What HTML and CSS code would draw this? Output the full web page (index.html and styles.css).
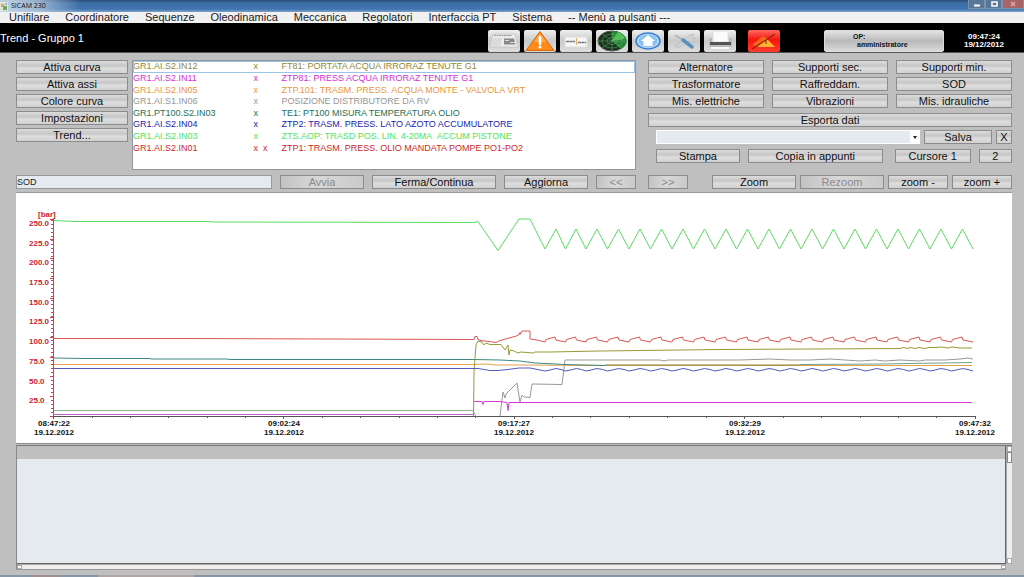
FILE: index.html
```html
<!DOCTYPE html>
<html lang="it">
<head>
<meta charset="utf-8">
<title>SICAM 230</title>
<link rel="stylesheet" href="styles.css">
</head>
<body>
<header class="titlebar">
  <svg class="app-icon" viewBox="0 0 8 9"><rect width="8" height="9" fill="#dbe6d4"/><path d="M1 2h3v3H1z" fill="#e09a83"/><path d="M3 4h4v4H3z" fill="#6aae5c"/><path d="M5 1h2v2H5z" fill="#8fb6dd"/></svg>
  <span>SICAM 230</span>
  <div class="window-buttons">
    <button class="win" aria-label="Riduci"><svg viewBox="0 0 14 8"><path d="M4 5.500h6" stroke="#fff" stroke-width="2"/></svg></button>
    <button class="win" aria-label="Ingrandisci"><svg viewBox="0 0 14 8"><path d="M5 2h5v4H5z" fill="none" stroke="#fff" stroke-width="1.500"/></svg></button>
    <button class="win win-close" aria-label="Chiudi"><svg viewBox="0 0 18 8"><path d="M7 2l4 4M11 2L7 6" stroke="#dca9a9" stroke-width="1.500"/></svg></button>
  </div>
</header>
<nav class="menu">
  <a href="#">Unifilare</a><a href="#">Coordinatore</a><a href="#">Sequenze</a><a href="#">Oleodinamica</a><a href="#">Meccanica</a><a href="#">Regolatori</a><a href="#">Interfaccia PT</a><a href="#">Sistema</a><a href="#">-- Menù a pulsanti ---</a>
</nav>
<section class="banner">
  <h1>Trend - Gruppo 1</h1>
  <div class="tools">
    <button class="tool" aria-label="Giornale"><svg viewBox="0 0 32 22"><path d="M5 4h22l3 13H2z" fill="#ececec" stroke="#bbb" stroke-width=".6"/><path d="M6 5.500h18" stroke="#999" stroke-width="1" stroke-dasharray="2 .5"/><path d="M5 9h9M4 11h9M4 13h9M3 15h10" stroke="#bbb" stroke-width=".7"/><path d="M16 8.500h10l1.500 6H16z" fill="#888"/><path d="M17 10.500h4M22 12.500h5" stroke="#ddd"/></svg></button>
    <button class="tool" aria-label="Allarmi"><svg viewBox="0 0 32 22"><path d="M16 1.500L30 20.500H2z" fill="#ff8a1c" stroke="#d96a0c" stroke-linejoin="round"/><path d="M16 3.500L22 12H10z" fill="#ffab4c"/><path d="M16 7v7" stroke="#fff" stroke-width="2.600" stroke-linecap="round"/><circle cx="16" cy="17" r="1.500" fill="#fff"/></svg></button>
    <button class="tool" aria-label="Sinottico"><svg viewBox="0 0 32 22"><path d="M5 7h22v10H5z" fill="#f7f7f7" stroke="#ddd"/><path d="M6 11.500h9M18 12.500h8" stroke="#777" stroke-width="1.300" stroke-dasharray="3 .4"/><path d="M16.500 8v7" stroke="#ddb36c" stroke-width="1.300"/></svg></button>
    <button class="tool" aria-label="Radar"><svg viewBox="0 0 32 22"><ellipse cx="16" cy="11" rx="14" ry="10" fill="#18361d" stroke="#555"/><path d="M16 11L16 1A14 10 0 0 1 25 19z" fill="#238936"/><path d="M16 11L22 2A14 10 0 0 1 29 9z" fill="#55c555"/><g fill="none" stroke="#66ad6c" stroke-width=".5"><ellipse cx="16" cy="11" rx="10" ry="7"/><ellipse cx="16" cy="11" rx="5" ry="3.500"/><path d="M2 11h28M16 1v20M6 4l20 14M26 4L6 18"/></g></svg></button>
    <button class="tool" aria-label="Home"><svg viewBox="0 0 32 22"><ellipse cx="16" cy="11" rx="12" ry="8" fill="#b8d9f8" stroke="#377fd0" stroke-width="1.500"/><ellipse cx="16" cy="11" rx="9.500" ry="6.300" fill="#8cc0f0"/><path d="M16 5l7 6h-2.500v5h-9v-5H9z" fill="#fff"/></svg></button>
    <button class="tool" aria-label="Strumenti"><svg viewBox="0 0 32 22"><path d="M21 5l5-1-2 3 1 2 3-1c-1 4-5 4-7 3L10 18l-3-2L18 8z" fill="#cfd1d3" stroke="#b5b5b5" stroke-width=".6"/><path d="M7 5l8 5" stroke="#a5a5a5" stroke-width="1.300"/><path d="M15 10l9 7" stroke="#5a8fc1" stroke-width="3.500" stroke-linecap="round"/></svg></button>
    <button class="tool" aria-label="Stampante"><svg viewBox="0 0 32 22"><path d="M9 1h15v11H9z" fill="#fbfbfb" stroke="#ddd"/><path d="M5 8h3v4h17V8h3v9H5z" fill="#b7b9ba"/><path d="M6 12h21v3H6z" fill="#505456"/><path d="M7 17h18v2H7z" fill="#f8f8f8"/></svg></button>
    <button class="tool tool-alarm" aria-label="Tacita allarme"><svg viewBox="0 0 32 22"><path d="M5 14l10-8 4 3-3 8H7z" fill="#f36918"/><path d="M18 8l9 9H10z" fill="#ffb32e"/><path d="M18 10v4" stroke="#9d5a12" stroke-width="1.500"/><path d="M4 19L27 4" stroke="#9d1d10" stroke-width="1.300"/></svg></button>
  </div>
  <button class="operator"><span>OP:</span><span class="operator-name">amministratore</span></button>
  <div class="clock"><time>09:47:24</time><time>19/12/2012</time></div>
</section>
<main>
  <div class="top">
    <div class="left">
      <div class="side">
        <button>Attiva curva</button><button>Attiva assi</button><button>Colore curva</button><button>Impostazioni</button><button>Trend...</button>
      </div>
      <div class="list">
        <table class="curves">
          <tr class="olive selected"><td>GR1.AI.S2.IN12</td><td>x</td><td>FT81: PORTATA ACQUA IRRORAZ TENUTE G1</td></tr>
          <tr class="magenta"><td>GR1.AI.S2.IN11</td><td>x</td><td>ZTP81: PRESS ACQUA IRRORAZ TENUTE G1</td></tr>
          <tr class="orange"><td>GR1.AI.S2.IN05</td><td>x</td><td>ZTP.101: TRASM. PRESS. ACQUA MONTE - VALVOLA VRT</td></tr>
          <tr class="gray"><td>GR1.AI.S1.IN06</td><td>x</td><td>POSIZIONE DISTRIBUTORE DA RV</td></tr>
          <tr class="teal"><td>GR1.PT100.S2.IN03</td><td>x</td><td>TE1: PT100 MISURA TEMPERATURA OLIO</td></tr>
          <tr class="blue"><td>GR1.AI.S2.IN04</td><td>x</td><td>ZTP2: TRASM. PRESS. LATO AZOTO ACCUMULATORE</td></tr>
          <tr class="green"><td>GR1.AI.S2.IN03</td><td>x</td><td>ZTS.AOP: TRASD POS. LIN. 4-20MA&nbsp; ACCUM PISTONE</td></tr>
          <tr class="red"><td>GR1.AI.S2.IN01</td><td>x&nbsp; x</td><td>ZTP1: TRASM. PRESS. OLIO MANDATA POMPE PO1-PO2</td></tr>
        </table>
      </div>
    </div>
    <div class="right">
      <div class="groups">
        <button>Alternatore</button><button>Supporti sec.</button><button>Supporti min.</button>
        <button>Trasformatore</button><button>Raffreddam.</button><button>SOD</button>
        <button>Mis. elettriche</button><button>Vibrazioni</button><button>Mis. idrauliche</button>
      </div>
      <button class="export">Esporta dati</button>
      <div class="save-row">
        <div class="combo"><select aria-label="Configurazione"><option></option></select></div>
        <button>Salva</button><button>X</button>
      </div>
      <div class="print-row">
        <button>Stampa</button><button>Copia in appunti</button><button>Cursore 1</button><button>2</button>
      </div>
    </div>
  </div>
  <div class="bar">
    <div class="bar-left">
      <input type="text" value="SOD" aria-label="Nome trend">
      <button disabled>Avvia</button><button>Ferma/Continua</button><button>Aggiorna</button><button disabled>&lt;&lt;</button>
    </div>
    <div class="bar-right">
      <button class="forward" disabled>&gt;&gt;</button><button>Zoom</button><button disabled>Rezoom</button><button>zoom -</button><button>zoom +</button>
    </div>
  </div>
  <div class="chart">
    <svg viewBox="16 193 996 250" role="img" aria-label="Trend">
      <g class="y-axis">
        <path d="M53.500 219V416"/>
        <path class="minor" d="M52 220V416"/>
        <path d="M50 219.500h3M50 239.500h3M50 258.500h3M50 278.500h3M50 298.500h3M50 317.500h3M50 337.500h3M50 357.500h3M50 376.500h3M50 396.500h3M50 416.500h3"/>
        <text x="38" y="217">[bar]</text>
        <text x="29" y="226">250.0</text><text x="29" y="246">225.0</text><text x="29" y="265">200.0</text><text x="29" y="285">175.0</text><text x="29" y="305">150.0</text><text x="29" y="324">125.0</text><text x="29" y="344">100.0</text><text x="29" y="364">75.0</text><text x="29" y="384">50.0</text><text x="29" y="403">25.0</text>
      </g>
      <g class="x-axis">
        <path d="M53 416.500H975"/>
        <path d="M53.500 416v3M283.500 416v3M514.500 416v3M744.500 416v3M975.500 416v3"/>
        <path d="M92.500 416v2M130.500 416v2M168.500 416v2M207.500 416v2M245.500 416v2M322.500 416v2M360.500 416v2M399.500 416v2M437.500 416v2M475.500 416v2M552.500 416v2M590.500 416v2M629.500 416v2M667.500 416v2M706.500 416v2M783.500 416v2M821.500 416v2M860.500 416v2M898.500 416v2M936.500 416v2"/>
        <text x="54" y="426">08:47:22</text><text x="54" y="435">19.12.2012</text>
        <text x="284" y="426">09:02:24</text><text x="284" y="435">19.12.2012</text>
        <text x="514" y="426">09:17:27</text><text x="514" y="435">19.12.2012</text>
        <text x="745" y="426">09:32:29</text><text x="745" y="435">19.12.2012</text>
        <text x="975" y="426">09:47:32</text><text x="975" y="435">19.12.2012</text>
      </g>
      <g class="curve">
        <path stroke="#9bb08f" d="M54 410.500H473l3 6"/>
        <path stroke="#999" d="M500 416l3-24 2 6 1-4 11-11 3 19 2-7 2 2 6 .5 2-13.500 30 .5 3-24.500H660l4 1 4-1h72l30-1 20 1 20 0 20-1 30 2 15-1 10 1 15-1 20 1 5-1 20 0 15-1 8-1 5 1"/>
        <path stroke="#c264c9" d="M54 414.500H473"/>
        <path stroke="#d63ad6" d="M474 401.500h8l1 3 1-3h16l7 1 1 8 1-8 3 0H972"/>
        <path stroke="#e2a14a" d="M54 364.500H474l12-.5 10 1 20 0 90 .5H972"/>
        <path stroke="#3f8980" d="M54 358l30 .5h66l1 .5h77l1 .5H474l26 .5 20 1 15 2 30 1.500 40 1"/>
        <path stroke="#83833a" d="M605 365H800"/>
        <path stroke="#6fa382" d="M800 364.500l80-.5 60-1 32-.5"/>
        <path stroke="#999a38" d="M473.500 416l.5-44 2-27 2-4 4 1 2 3 2-2 4 1.500 11 0 4 5.500 3-5 1 10 1-5 4 1 4 2 3-1 12 1 2-1 15 0 50-1 120-1.500 180-1 4-1 3 1 4-1 4 1 4-1 6 1 4-1 7 0 5-.5 7 1 4-1 8 1h12"/>
        <path stroke="#5757bc" d="M54 368.500H474l4 0 12 2 8 0 10-1 11-1.500h11l15 3 5-1 6-1.500 5 1 4.500 1.500 5-1 6-1.500 5 1 4.500 1.500
          l5-1 6-1.500 5.500 1 5 1.500 5-1 6-1.500 5.500 1 5 1.500 5-1 6-1.500 5.500 1 5 1.500 5-1 6-1.500 5.500 1 5 1.500 5-1 6-1.500 5.500 1 5 1.500 5-1 6-1.500 5.500 1 5 1.500
          l5-1 6-1.500 5.500 1 5 1.500 5-1 6-1.500 5.500 1 5 1.500 5-1 6-1.500 5.500 1 5 1.500 5-1 6-1.500 5.500 1 5 1.500 5-1 6-1.500 5.500 1 5 1.500 5-1 6-1.500 5.500 1 5 1.500
          l5-1 6-1.500 5.500 1 5 1.500 5-1 6-1.500 5.500 1 5 1.500 5-1 6-1.500 5.500 1 5 1.500 5-1 6-1.500 5.500 1 5 1.500 5-1 6-1.500 5.500 1 5 1.500 5-1 6-1.500 5.500 1 5 1.500"/>
        <path stroke="#d85858" d="M54 338.500H185l289 1 1-3 2 0 1 3 3 1 8 1 7 1 4-2 18-5 2-3 0 2 2-3.500h8v8l7 1 8 2
          l1-2.500 9-2.500 1 3 9.500 2 1-2.500 9-2.500 1 3 9.500 2
          l1-2.500 9.500-2.500 1 3 10 2 1-2.500 9.500-2.500 1 3 10 2 1-2.500 9.500-2.500 1 3 10 2 1-2.500 9.500-2.500 1 3 10 2 1-2.500 9.500-2.500 1 3 10 2 1-2.500 9.500-2.500 1 3 10 2
          l1-2.500 9.500-2.500 1 3 10 2 1-2.500 9.500-2.500 1 3 10 2 1-2.500 9.500-2.500 1 3 10 2 1-2.500 9.500-2.500 1 3 10 2 1-2.500 9.500-2.500 1 3 10 2 1-2.500 9.500-2.500 1 3 10 2
          l1-2.500 9.500-2.500 1 3 10 2 1-2.500 9.500-2.500 1 3 10 2 1-2.500 9.500-2.500 1 3 10 2 1-2.500 9.500-2.500 1 3 10 2 1-2.500 9.500-2.500 1 3 10 2 1-2.500 9.500-2.500 1 3 10 2"/>
        <path stroke="#5cdb62" d="M54 220.500l21 1 130 0 10 .5 259 .5 1 0 2.500-1.500 20.500 29.500L519 219h11l15 30 11-20 9.500 20 10.500-20 10 20
          l11-20 10.500 20 11-20 10.500 20 11-20 10.500 20 11-20 10.500 20 11-20 10.500 20 11-20 10.500 20
          l11-20 10.500 20 11-20 10.500 20 11-20 10.500 20 11-20 10.500 20 11-20 10.500 20 11-20 10.500 20
          l11-20 10.500 20 11-20 10.500 20 11-20 10.500 20 11-20 10.500 20 11-20 10.500 20 11-20 10.500 20"/>
      </g>
    </svg>
  </div>
  <div class="events">
    <div class="events-head"></div>
    <div class="events-body"></div>
    <div class="vscroll"><i></i><b></b><i></i></div>
    <div class="hscroll"><i></i><i></i></div>
  </div>
</main>
<footer class="taskbar"></footer>
</body>
</html>
```
FILE: styles.css
```css
* { box-sizing: border-box; }
body {
  margin: 0;
  min-height: 100vh;
  display: flex;
  flex-direction: column;
  background: #bfbfbf;
  color: #111;
  font: 11px/14px "Liberation Sans", Arial, sans-serif;
}
svg { display: block; }
button { font: inherit; color: inherit; margin: 0; padding: 0; }

.titlebar {
  height: 12px;
  display: flex;
  align-items: center;
  gap: 3px;
  background: linear-gradient(90deg, rgba(210, 222, 236, .9), rgba(190, 207, 226, .7) 40px, rgba(60, 110, 165, 0) 80px), linear-gradient(#2a4c77 0, #3d6ea6 25%, #3f74b0 75%, #7ea1c6);
  font: 7px/10px "Open Sans", sans-serif;
}
.app-icon { width: 8px; height: 9px; }
.window-buttons { display: flex; align-self: flex-start; margin-left: auto; }
.win { height: 9px; width: 17px; border: 1px solid #7c93ad; border-top: 0; background: #587799; }
.win svg { height: 8px; margin: auto; }
.win-close { width: 22px; background: #a96468; }

.menu { height: 11px; display: flex; gap: 16px; padding-left: 9px; background: #f1f1f1; line-height: 11px; }
.menu a { color: #222; text-decoration: none; white-space: nowrap; }

.banner { height: 30px; display: flex; align-items: center; background: #000; color: #fff; border-bottom: 1px solid #555; }
h1 { margin: 0; font-size: 11px; font-weight: normal; }
.tools { display: flex; gap: 4px; margin-left: auto; padding-top: 6px; }
.tool { width: 32px; height: 22px; border: 0; border-radius: 2px; background: linear-gradient(#efefef, #c9c9c9 50%, #dedede); }
.tool svg { width: 32px; height: 22px; }
.tool-alarm { margin-left: 8px; background: linear-gradient(#ff6a5f, #f4150c 45%, #ff3c2e); }
.operator {
  width: 120px; height: 22px; margin: 6px 0 0 44px; padding-left: 28px;
  display: flex; flex-direction: column; justify-content: center;
  border: 1px solid #ddd; border-radius: 2px;
  background: linear-gradient(#e2e2e2, #b9b9b9 50%, #d9d9d9);
  color: #111; font-weight: bold; font-size: 7px; line-height: 8px; text-align: left;
}
.operator-name { padding-left: 4px; }
.clock { width: 80px; padding-top: 6px; display: flex; flex-direction: column; align-items: center; font-weight: bold; font-size: 8px; line-height: 8px; }

main { flex: 1; display: flex; flex-direction: column; padding: 7px 12px 5px 16px; }
main button {
  height: 14px;
  border: 1px solid #8c8c8c;
  background: linear-gradient(#dcdcdc, #c6c6c6 40%, #dedede 60%, #d0d0d0);
  line-height: 12px;
  white-space: nowrap;
}
main button:disabled { color: #8b8b8b; background: linear-gradient(90deg, #c2c2c2, #d8d8d8 45%, #cacaca); }

.top, .bar { display: grid; grid-template-columns: 620fr 364fr; gap: 12px; }
.left { display: grid; grid-template-columns: 112fr 504fr; gap: 4px; }
.side { display: grid; align-content: start; gap: 3px; }
.list { height: 110px; border: 1px solid #8f979e; background: #fff; }
.curves { width: 100%; height: 93px; border-collapse: collapse; table-layout: fixed; font-size: 9px; line-height: 11px; }
.curves td { padding: 0; white-space: nowrap; }
.curves td:nth-child(1) { width: 24%; }
.curves td:nth-child(2) { width: 28px; }
.selected { outline: 1px solid #9cc4e6; outline-offset: -1px; }
.olive { color: #8e8836; }
.magenta { color: #d62fd6; }
.orange { color: #e8963c; }
.gray { color: #969696; }
.teal { color: #1c7058; }
.blue { color: #2222ac; }
.green { color: #4fe45c; }
.red { color: #c92b2b; }

.groups { display: grid; grid-template-columns: repeat(3, 1fr); gap: 3px 8px; }
.export { width: 100%; margin: 5px 0 3px; display: block; }
.save-row { display: grid; grid-template-columns: 264fr 68fr 16px; gap: 4px; padding-left: 8px; }
.combo select { width: 100%; height: 14px; display: block; border: 1px solid #fff; border-right-width: 10px; background: #e4eaf0; appearance: none; border-radius: 0; }
.combo { position: relative; }
.combo::after { content: ""; position: absolute; right: 3px; top: 6px; border: 2px solid transparent; border-top: 3px solid #222; }
.print-row { display: flex; gap: 8px; margin-top: 5px; padding-left: 8px; }
.print-row button { flex: 84 1 0; }
.print-row button:nth-child(2) { flex-grow: 136; }
.print-row button:nth-child(3) { flex-grow: 76; margin-left: 4px; }
.print-row button:nth-child(4) { flex-grow: 32; }

.bar { margin-top: 5px; }
.bar-left { display: grid; grid-template-columns: 256fr 84fr 124fr 84fr 40fr; gap: 8px; }
.bar-left input { min-width: 0; height: 14px; padding: 0; border: 1px solid #999; background: #e4eaf0; color: #222; font: 9px/10px "Liberation Sans", Arial, sans-serif; }
.bar-right { display: grid; grid-template-columns: 40fr 104fr 84fr 60fr 60fr; gap: 4px; }
.bar-right .forward + button { margin-left: 20px; }

.chart { margin-top: 3px; border-top: 1px solid #999; border-bottom: 1px solid #8a8a8a; background: #fff; }
.chart svg { width: 100%; height: auto; }
.chart path { fill: none; stroke-width: 1; }
.chart text { font-weight: bold; font-size: 8px; }
.y-axis path { stroke: #d63e4b; }
.y-axis .minor { stroke-width: 2; stroke-dasharray: 1 3; }
.y-axis text { fill: #c92331; }
.x-axis path { stroke: #555; }
.x-axis text { fill: #111; text-anchor: middle; }

.events { flex: 1; min-height: 100px; margin-top: 1px; display: grid; grid-template: 13px 1fr 6px / 1fr 6px; border-top: 1px solid #777; border-left: 1px solid #888; }
.events-head { background: #bfbfbf; border-right: 1px solid #666; }
.events-body { background: #e4eaf0; border-right: 1px solid #666; border-bottom: 1px solid #666; }
.vscroll { grid-area: 1 / 2 / 3 / 3; display: flex; flex-direction: column; background: #f0eeeb; border-left: 1px solid #aaa; }
.hscroll { grid-area: 3 / 1 / 4 / 2; display: flex; justify-content: space-between; background: #f0eeeb; border-top: 1px solid #aaa; border-bottom: 1px solid #999; }
.vscroll i, .hscroll i { width: 5px; height: 6px; background: #fff; border: 1px solid #aaa; }
.hscroll i { height: 4px; }
.vscroll b { height: 11px; background: #fafafa; border: 1px solid #888; margin-bottom: auto; }

.taskbar { height: 2px; background: linear-gradient(90deg, #8795a5 32px, #a08f90 32px 60px, #8795a5 60px 98px, #b0a4a4 98px 194px, #8795a5 194px); }
```
